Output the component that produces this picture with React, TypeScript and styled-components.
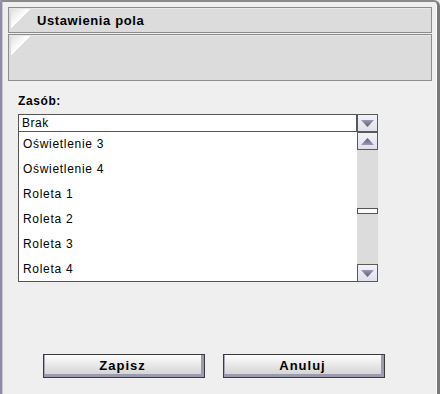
import styled, { createGlobalStyle } from "styled-components";

const GlobalStyle = createGlobalStyle`
  html, body {
    margin: 0;
    padding: 0;
    background: #efefef;
  }

  * {
    box-sizing: border-box;
  }
`;

const Window = styled.div`
  display: flex;
  flex-direction: column;
  width: 440px;
  height: 394px;
  padding: 5px 5px 0 6px;
  background: #efefef;
  border-top: 2px solid #8a8a8a;
  border-left: 2px solid #8e8ca2;
  border-right: 3px solid #7a7a7a;
  border-top-right-radius: 6px;
  box-shadow: inset 1px 0 0 #c9c8d4, inset -1px 0 0 #fbfbfb;
  font-family: "Liberation Sans", Arial, sans-serif;
  color: #000;
`;

const Bar = styled.div<{ $height: number }>`
  position: relative;
  display: flex;
  align-items: center;
  flex-shrink: 0;
  height: ${({ $height }) => $height}px;
  margin-bottom: 1px;
  padding-left: 28px;
  background: #dcdcdc;
  border: 1px solid #8c8c8c;
  box-shadow: inset 0 1px 0 #e8e8e8;

  &::before {
    content: "";
    position: absolute;
    left: 2px;
    top: 1px;
    width: 19px;
    height: 19px;
    background: linear-gradient(135deg, #e0e0e0 0%, #ffffff 50%, transparent 50%);
  }
`;

const Title = styled.span`
  font-size: 13px;
  font-weight: bold;
  letter-spacing: 0.6px;
`;

const Form = styled.div`
  display: flex;
  flex-direction: column;
  padding-left: 10px;
`;

const Label = styled.div`
  margin-top: 12px;
  height: 14px;
  font-size: 12px;
  line-height: 14px;
  font-weight: bold;
  letter-spacing: 0.6px;
`;

const ComboRow = styled.div`
  display: flex;
  margin-top: 6px;
  height: 18px;
`;

const ComboField = styled.div`
  width: 339px;
  height: 18px;
  padding-left: 3px;
  background: #fff;
  border: 1px solid #555;
  font-size: 12px;
  line-height: 16px;
  letter-spacing: 0.5px;
`;

const ArrowButton = styled.div`
  display: flex;
  align-items: center;
  justify-content: center;
  width: 21px;
  height: 18px;
  background: linear-gradient(#f2f2fa, #e0e0ec);
  border: 1px solid #5a5a5a;
`;

const ListRow = styled.div`
  display: flex;
  height: 150px;
`;

const List = styled.ul`
  width: 339px;
  margin: 0;
  padding: 0;
  list-style: none;
  overflow: hidden;
  background: #fff;
  border-left: 1px solid #555;
  border-bottom: 1px solid #555;
`;

const Item = styled.li`
  height: 25px;
  padding-left: 4px;
  font-size: 12px;
  line-height: 25px;
  letter-spacing: 0.7px;
`;

const Scrollbar = styled.div`
  display: flex;
  flex-direction: column;
  width: 21px;
  background: #dcdcdc;
`;

const Track = styled.div`
  flex: 1;
`;

const Thumb = styled.div<{ $offset: number }>`
  height: 6px;
  margin-top: ${({ $offset }) => $offset}px;
  background: #fbfbfb;
  border: 1px solid #555;
`;

const ButtonRow = styled.div`
  display: flex;
  gap: 18px;
  margin-top: 72px;
  padding-left: 35px;
`;

const Button = styled.button`
  width: 162px;
  height: 24px;
  padding: 0 3px 2px 0;
  background: linear-gradient(#fdfdfd, #cfcfcf);
  border: 1px solid #3a3a3a;
  box-shadow: inset -3px -3px 0 #9c9aae, inset 1px 0 0 #a9a7b9;
  font-family: "Liberation Sans", Arial, sans-serif;
  font-size: 13px;
  font-weight: bold;
  letter-spacing: 1px;
  color: #000;
`;

function Arrow({ up = false }: { up?: boolean }) {
  const id = up ? "arrowUp" : "arrowDown";
  return (
    <svg width="13" height="7" viewBox="0 0 13 7">
      <defs>
        <linearGradient id={id} x1="0" y1="0" x2="0" y2="1">
          <stop offset="0" stopColor={up ? "#5a5a70" : "#9a9ab0"} />
          <stop offset="1" stopColor={up ? "#9a9ab0" : "#5a5a70"} />
        </linearGradient>
      </defs>
      <polygon points={up ? "6.5,0 13,7 0,7" : "0,0 13,0 6.5,7"} fill={`url(#${id})`} />
    </svg>
  );
}

const items = ["Oświetlenie 3", "Oświetlenie 4", "Roleta 1", "Roleta 2", "Roleta 3", "Roleta 4"];

export default function App() {
  return (
    <>
      <GlobalStyle />
      <Window>
        <Bar $height={26}>
          <Title>Ustawienia pola</Title>
        </Bar>
        <Bar $height={47} />
        <Form>
          <Label>Zasób:</Label>
          <ComboRow>
            <ComboField>Brak</ComboField>
            <ArrowButton>
              <Arrow />
            </ArrowButton>
          </ComboRow>
          <ListRow>
            <List>
              {items.map((item) => (
                <Item key={item}>{item}</Item>
              ))}
            </List>
            <Scrollbar>
              <ArrowButton>
                <Arrow up />
              </ArrowButton>
              <Track>
                <Thumb $offset={58} />
              </Track>
              <ArrowButton>
                <Arrow />
              </ArrowButton>
            </Scrollbar>
          </ListRow>
        </Form>
        <ButtonRow>
          <Button>Zapisz</Button>
          <Button>Anuluj</Button>
        </ButtonRow>
      </Window>
    </>
  );
}
